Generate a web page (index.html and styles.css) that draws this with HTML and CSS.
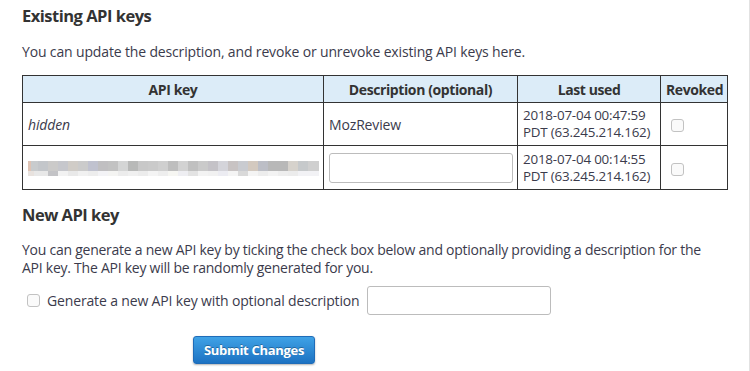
FILE: index.html
```html
<!DOCTYPE html>
<html lang="en">
<head>
  <meta charset="UTF-8">
  <title>API keys</title>
  <link rel="stylesheet" href="styles.css">
</head>
<body>
  <div class="page">
    <h2>Existing API keys</h2>
    <p>You can update the description, and revoke or unrevoke existing API keys here.</p>

    <table class="keys">
      <thead>
        <tr>
          <th class="col-key">API key</th>
          <th class="col-desc">Description (optional)</th>
          <th class="col-used">Last used</th>
          <th class="col-rev">Revoked</th>
        </tr>
      </thead>
      <tbody>
        <tr class="row1">
          <td><em>hidden</em></td>
          <td>MozReview</td>
          <td class="used">2018-07-04 00:47:59<br>PDT (63.245.214.162)</td>
          <td><input type="checkbox" class="check"></td>
        </tr>
        <tr class="row2">
          <td><div class="blurred"></div></td>
          <td><input type="text" class="field field-desc"></td>
          <td class="used">2018-07-04 00:14:55<br>PDT (63.245.214.162)</td>
          <td><input type="checkbox" class="check"></td>
        </tr>
      </tbody>
    </table>

    <h2 class="new-title">New API key</h2>
    <p class="two-lines">You can generate a new API key by ticking the check box below and optionally providing a description for the API key. The API key will be randomly generated for you.</p>

    <div class="new-row">
      <input type="checkbox" class="check">
      <label>Generate a new API key with optional description</label>
      <input type="text" class="field field-new">
    </div>

    <div class="actions">
      <button class="submit">Submit Changes</button>
    </div>
  </div>
</body>
</html>
```

FILE: styles.css
```css
body {
  margin: 0;
  font-family: "Open Sans", "Noto Sans", sans-serif;
  color: #3b3b4c;
  background: #fff;
  overflow: hidden;
}
.page {
  padding: 0 22px;
  width: 705px;
  height: 371px;
  border-right: 1px solid #e2e2e2;
  box-sizing: content-box;
}
h2 {
  margin: 0;
  padding-top: 5px;
  font-size: 16.5px;
  letter-spacing: -0.5px;
  line-height: 22px;
  font-weight: bold;
  color: #333;
}
p {
  margin: 16px 0 0;
  font-size: 14px;
  letter-spacing: -0.15px;
  line-height: 18px;
}
.keys {
  margin-top: 14px;
  width: 706px;
  border-collapse: collapse;
  font-size: 14px;
  letter-spacing: -0.15px;
  table-layout: fixed;
}
.keys th, .keys td {
  border: 1px solid #333;
  padding: 0 5px;
  text-align: left;
  line-height: 17px;
}
.keys th {
  background: #dcecf8;
  text-align: center;
  height: 26px;
  color: #333;
  letter-spacing: -0.4px;
}
.col-key { width: 290px; }
.col-desc { width: 183px; }
.col-used { width: 132px; }
.used {
  white-space: nowrap;
  font-size: 13.4px;
  letter-spacing: -0.2px;
}
.row1 td { height: 42px; }
.row2 td { height: 43px; }
.check {
  appearance: none;
  width: 13px;
  height: 13px;
  margin: 0 0 0 5px;
  border: 1px solid #c2c2c2;
  border-radius: 3px;
  background: #fafafa;
  vertical-align: middle;
}
.field {
  box-sizing: border-box;
  height: 30px;
  border: 1px solid #bcbcbc;
  border-radius: 3px;
  background: #fff;
}
.field-desc {
  width: 184px;
  display: block;
}
.blurred {
  width: 291px;
  height: 16px;
  background:
    linear-gradient(90deg, #e8e2de 0 6px, #e8e8e8 6px 20px, #c3c3c6 20px 30px, #f2f2f2 30px 40px, #e9e9e9 40px 50px, #f1f1f1 50px 60px, #ededed 60px 70px, #f3f3f6 70px 80px, #f4f4f2 80px 90px, #ececec 90px 100px, #f0f0f0 100px 110px, #ececec 110px 120px, #f4f4f4 120px 130px, #eeeeee 130px 140px, #f6f6f2 140px 150px, #eeeef2 150px 160px, #e3e3e3 160px 170px, #f3f3f3 170px 180px, #f1f1f1 180px 190px, #ececf2 190px 200px, #f4f4f4 200px 210px, #d9d9d9 210px 220px, #f4f4f4 220px 230px, #ededed 230px 240px, #f3f3f3 240px 250px, #eeeeee 250px 260px, #ececec 260px 270px, #f2f2f5 270px 291px) 0 11px / 100% 5px no-repeat,
    linear-gradient(90deg, #dfc3b4 0 3px, #c8cbcd 3px 10px, #c3c6ca 10px 20px, #cbcac9 20px 30px, #c6c7cc 30px 40px, #d0ccc7 40px 50px, #cbcbcb 50px 60px, #c0c2cf 60px 70px, #c0bfc1 70px 80px, #c2c2c2 80px 90px, #d4d5d5 90px 100px, #b8b9b8 100px 110px, #c8c8c8 110px 120px, #cacaca 120px 130px, #cfcfcf 130px 140px, #bebebe 140px 150px, #d2d2d2 150px 160px, #c0c0c0 160px 170px, #cacaca 170px 180px, #c4c2c7 180px 190px, #d4d4da 190px 200px, #c8c3c3 200px 210px, #c9cbd0 210px 220px, #d3c9bf 220px 230px, #bcbec6 230px 240px, #b8b8b8 240px 260px, #d6d2cc 260px 270px, #c6c9cb 270px 280px, #cfcfcf 280px 291px) 0 1px / 100% 10px no-repeat;
}
.new-title {
  margin-top: 9px;
}
.two-lines {
  margin-top: 15px;
  max-width: 698px;
  letter-spacing: -0.25px;
}
.new-row {
  display: flex;
  align-items: center;
  gap: 7px;
  margin-top: 9px;
  font-size: 14px;
  letter-spacing: -0.15px;
}
.new-row .check {
  margin-left: 5px;
}
.field-new {
  width: 184px;
  height: 29px;
}
.actions {
  margin-top: 21px;
  padding-left: 171px;
}
.submit {
  width: 122px;
  height: 28px;
  border: 1px solid #1f6cb8;
  border-radius: 3px;
  background: linear-gradient(#3fa2e6, #1d72c2);
  color: #fff;
  font-family: inherit;
  font-size: 13px;
  font-weight: bold;
  letter-spacing: -0.3px;
  text-shadow: 0 -1px 0 rgba(0, 0, 0, 0.3);
  box-shadow: 0 1px 2px rgba(0, 0, 0, 0.3);
}
```
